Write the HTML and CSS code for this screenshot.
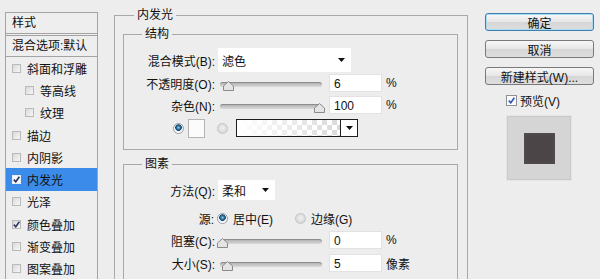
FILE: index.html
```html
<!DOCTYPE html>
<html lang="zh-CN">
<head>
    <meta charset="UTF-8">
    <meta name="viewport" content="width=device-width, initial-scale=1.0">
    <title>图层样式 - 内发光</title>
    <link rel="stylesheet" href="styles.css">
</head>
<body>
    <div class="dialog">
        <div class="style-list">
            <div class="list-head">样式</div>
            <div class="list-blend">混合选项:默认</div>
            <div class="list-item"><span class="check"></span>斜面和浮雕</div>
            <div class="list-item sub"><span class="check"></span>等高线</div>
            <div class="list-item sub"><span class="check"></span>纹理</div>
            <div class="list-item"><span class="check"></span>描边</div>
            <div class="list-item"><span class="check"></span>内阴影</div>
            <div class="list-item active"><span class="check on white"><svg width="7" height="7" viewBox="0 0 7 7"><path d="M0.8 3.6 L2.8 5.8 L6.4 0.8" fill="none" stroke="#24305a" stroke-width="1.6"/></svg></span>内发光</div>
            <div class="list-item"><span class="check"></span>光泽</div>
            <div class="list-item"><span class="check on"><svg width="7" height="7" viewBox="0 0 7 7"><path d="M0.8 3.6 L2.8 5.8 L6.4 0.8" fill="none" stroke="#2a3766" stroke-width="1.6"/></svg></span>颜色叠加</div>
            <div class="list-item"><span class="check"></span>渐变叠加</div>
            <div class="list-item"><span class="check"></span>图案叠加</div>
        </div>

        <div class="effect">
            <fieldset class="group outer">
                <legend>内发光</legend>

                <fieldset class="group inner">
                    <legend>结构</legend>
                    <div class="row row-blend">
                        <span class="label">混合模式(B):</span>
                        <div class="select wide">滤色<svg class="arrow" width="7" height="4" viewBox="0 0 7 4"><path d="M0 0 H7 L3.5 4 Z" fill="#111"/></svg></div>
                    </div>
                    <div class="row">
                        <span class="label">不透明度(O):</span>
                        <div class="slider"><span class="track"></span><svg class="thumb" style="left: 3px" width="11" height="10" viewBox="0 0 11 10"><path d="M0.5 9.5 V5 L5.5 0.5 L10.5 5 V9.5 Z" fill="#e4e4e4" stroke="#8a8a8a"/></svg></div>
                        <div class="field">6</div>
                        <span class="unit">%</span>
                    </div>
                    <div class="row">
                        <span class="label">杂色(N):</span>
                        <div class="slider"><span class="track"></span><svg class="thumb" style="left: 94px" width="11" height="10" viewBox="0 0 11 10"><path d="M0.5 9.5 V5 L5.5 0.5 L10.5 5 V9.5 Z" fill="#e4e4e4" stroke="#8a8a8a"/></svg></div>
                        <div class="field">100</div>
                        <span class="unit">%</span>
                    </div>
                    <div class="row row-color">
                        <span class="radio on first"></span>
                        <span class="swatch"></span>
                        <span class="radio second"></span>
                        <div class="gradient">
                            <span class="gradient-fill"></span>
                            <span class="gradient-drop"><svg width="7" height="4" viewBox="0 0 7 4"><path d="M0 0 H7 L3.5 4 Z" fill="#111"/></svg></span>
                        </div>
                    </div>
                </fieldset>

                <fieldset class="group inner elements">
                    <legend>图素</legend>
                    <div class="row row-method">
                        <span class="label">方法(Q):</span>
                        <div class="select narrow">柔和<svg class="arrow" width="7" height="4" viewBox="0 0 7 4"><path d="M0 0 H7 L3.5 4 Z" fill="#111"/></svg></div>
                    </div>
                    <div class="row row-source">
                        <span class="label">源:</span>
                        <span class="radio on src-center"></span>
                        <span class="radio-text">居中(E)</span>
                        <span class="radio src-edge"></span>
                        <span class="radio-text">边缘(G)</span>
                    </div>
                    <div class="row">
                        <span class="label">阻塞(C):</span>
                        <div class="slider"><span class="track"></span><svg class="thumb" style="left: -3px" width="11" height="10" viewBox="0 0 11 10"><path d="M0.5 9.5 V5 L5.5 0.5 L10.5 5 V9.5 Z" fill="#e4e4e4" stroke="#8a8a8a"/></svg></div>
                        <div class="field">0</div>
                        <span class="unit">%</span>
                    </div>
                    <div class="row row-size">
                        <span class="label">大小(S):</span>
                        <div class="slider"><span class="track"></span><svg class="thumb" style="left: 2px" width="11" height="10" viewBox="0 0 11 10"><path d="M0.5 9.5 V5 L5.5 0.5 L10.5 5 V9.5 Z" fill="#e4e4e4" stroke="#8a8a8a"/></svg></div>
                        <div class="field">5</div>
                        <span class="unit">像素</span>
                    </div>
                </fieldset>
            </fieldset>
        </div>

        <div class="actions">
            <button class="btn default">确定</button>
            <button class="btn">取消</button>
            <button class="btn">新建样式(W)...</button>
            <label class="preview-check"><span class="check on blue"><svg width="7" height="7" viewBox="0 0 7 7"><path d="M0.8 3.6 L2.8 5.8 L6.4 0.8" fill="none" stroke="#2d55b8" stroke-width="1.6"/></svg></span>预览(V)</label>
            <div class="preview">
                <div class="preview-swatch"></div>
            </div>
        </div>
    </div>
</body>
</html>
```

FILE: styles.css
```css
body {
    margin: 0;
    height: 279px;
    overflow: hidden;
    background-color: #ededed;
    font-family: "Liberation Sans", "Noto Sans CJK SC", sans-serif;
    font-size: 12px;
    color: #111;
}
.dialog {
    display: flex;
    align-items: flex-start;
}

/* left list */
.style-list {
    box-sizing: border-box;
    width: 93px;
    height: 290px;
    margin: 12px 0 0 5px;
    border: 1px solid #a3a3a3;
    border-bottom: none;
    background-color: #eeeeee;
}
.style-list .list-head {
    height: 20px;
    line-height: 20px;
    padding-left: 6px;
    border-bottom: 3px double #a3a3a3;
}
.style-list .list-blend {
    height: 20px;
    line-height: 20px;
    padding-left: 6px;
    border-bottom: 1px solid #a3a3a3;
}
.style-list .list-item {
    display: flex;
    align-items: center;
    height: 22.3px;
    padding-left: 6px;
}
.style-list .list-item.sub {
    padding-left: 19px;
}
.style-list .list-item.active {
    background-color: #3b8cea;
}
.check {
    box-sizing: border-box;
    display: inline-flex;
    align-items: center;
    justify-content: center;
    width: 9px;
    height: 9px;
    margin-right: 6px;
    border: 1px solid #b9b9b9;
    background: linear-gradient(135deg, #d9d9d9, #f7f7f7);
}
.check.white {
    border-color: #e6eefa;
    background: #f8f8f8;
}
.check.blue {
    width: 11px;
    height: 11px;
    border-color: #8e8f99;
    background: #fbfbfb;
    margin-right: 3px;
}

/* middle panel */
.effect {
    width: 354px;
    margin: 8px 0 0 16px;
}
.group {
    margin: 0;
    border: 1px solid #a9a9a9;
    min-width: 0;
}
.group legend {
    padding: 0 3px;
    line-height: 14px;
}
.group.outer {
    padding: 5px 9px 40px 8px;
}
.group.outer > legend {
    margin-left: 11px;
}
.group.inner {
    padding: 0 0 9px 0;
}
.group.inner > legend {
    margin-left: 18px;
}
.group.elements {
    margin-top: 7px;
    padding-bottom: 30px;
}
.row {
    display: flex;
    align-items: center;
    height: 22px;
}
.row .label {
    width: 91px;
    text-align: right;
    white-space: nowrap;
}
.row-blend {
    height: 24px;
    margin-top: 7px;
}
.row-color {
    height: 24px;
}
.select {
    box-sizing: border-box;
    display: flex;
    align-items: center;
    justify-content: space-between;
    margin-left: 3px;
    padding: 0 6px 0 4px;
    background-color: #fff;
}
.select.wide {
    width: 133px;
    height: 24px;
}
.select.narrow {
    width: 57px;
    height: 20px;
}
.slider {
    position: relative;
    width: 102px;
    height: 12px;
    margin: 8px 0 0 5px;
}
.slider .track {
    display: block;
    box-sizing: border-box;
    height: 5px;
    margin-top: 1px;
    border-radius: 3px;
    border-top: 1px solid #8d8d8d;
    background: linear-gradient(#b4b4b4, #dadada);
}
.slider .thumb {
    position: absolute;
    top: 0;
}
.field {
    box-sizing: border-box;
    width: 53px;
    height: 18px;
    line-height: 18px;
    margin-left: 7px;
    padding-left: 4px;
    background-color: #fff;
    border: 1px solid #e2e2e2;
}
.unit {
    margin-left: 4px;
}
.radio {
    box-sizing: border-box;
    display: inline-block;
    width: 11px;
    height: 11px;
    border-radius: 50%;
    border: 1px solid #c4c4c4;
    background: radial-gradient(circle at 50% 45%, #f2f2f2 0, #dcdcdc 4px);
}
.radio.on {
    border-color: #9a9fa6;
    background: radial-gradient(circle at 50% 40%, #9fd2ee 0, #2f7aa6 1.6px, #174869 3px, #e9eef2 3.6px, #ffffff 5px);
}
.radio.first {
    margin-left: 49px;
}
.swatch {
    box-sizing: border-box;
    width: 17px;
    height: 19px;
    margin-left: 4px;
    border: 1px solid #b4b4b4;
    background-color: #fbfbfb;
}
.radio.second {
    margin-left: 12px;
}
.gradient {
    box-sizing: border-box;
    display: flex;
    width: 122px;
    height: 18px;
    margin-left: 8px;
    border: 1px solid #1e1e1e;
}
.gradient-fill {
    flex: 1;
    background:
        linear-gradient(to right, #ffffff 0%, rgba(255, 255, 255, 0.2) 100%),
        repeating-conic-gradient(#d0d0d0 0 25%, #ffffff 0 50%) 0 0 / 10px 10px;
}
.gradient-drop {
    display: flex;
    align-items: center;
    justify-content: center;
    width: 16px;
    border-left: 1px solid #1e1e1e;
    background-color: #fff;
}
.row-method {
    margin-top: 8px;
}
.row-source {
    margin-top: 6px;
}
.row-source .label {
    width: 90px;
}
.radio.src-center {
    margin-left: 3px;
}
.radio.src-edge {
    margin-left: 22px;
}
.radio-text {
    margin-left: 5px;
}
.row-size {
    margin-top: 1px;
}

/* right column */
.actions {
    display: flex;
    flex-direction: column;
    width: 109px;
    margin: 13px 0 0 17px;
}
.btn {
    height: 18px;
    padding: 0;
    margin-bottom: 9px;
    font-family: inherit;
    font-size: 12px;
    color: #111;
    border: 1px solid #7a7a7a;
    border-radius: 3px;
    background: linear-gradient(#f7f7f7, #e6e6e6 50%, #d6d6d6 51%, #dedede);
}
.btn.default {
    border-color: #3d7fae;
    box-shadow: inset 0 0 0 1px #a9dcf2;
}
.preview-check {
    display: flex;
    align-items: center;
    height: 11px;
    margin: 1px 0 0 21px;
}
.preview {
    box-sizing: border-box;
    display: flex;
    align-items: center;
    justify-content: center;
    width: 66px;
    height: 66px;
    margin: 9px 0 0 21px;
    border: 1px solid #e4e4e4;
    background-color: #d5d5d5;
    box-shadow: inset 0 0 0 1px #cacaca;
}
.preview-swatch {
    width: 31px;
    height: 31px;
    background-color: #4b4547;
    box-shadow: inset 0 0 4px rgba(255, 255, 255, 0.08);
}
```
